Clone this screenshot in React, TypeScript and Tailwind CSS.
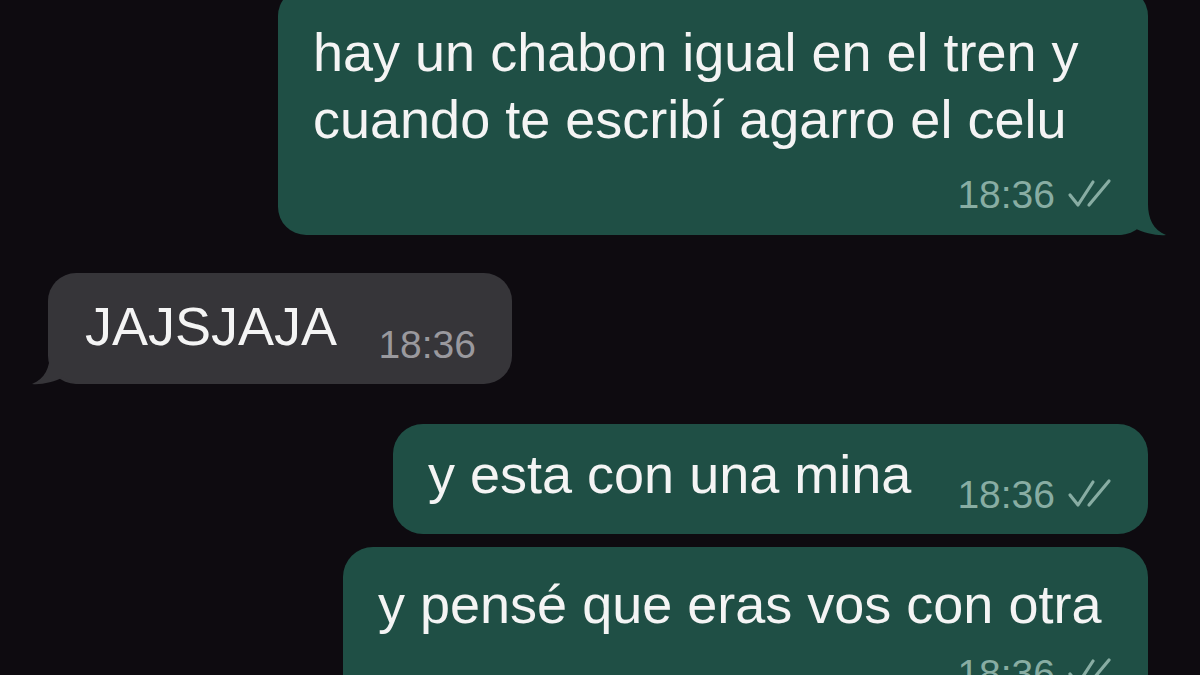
import React from "react";

const GREEN = "#1f4f45";

// double tick, as WhatsApp draws it when delivered
const Ticks = () => (
  <svg width="46" height="30" viewBox="0 0 46 30" fill="none" className="ml-[12px] mt-[7px] shrink-0">
    <path d="M3 17 L11 27 L26 4" stroke="#88ada3" strokeWidth="3.2" strokeLinecap="round" strokeLinejoin="round" />
    <path d="M22 27 L42 3" stroke="#88ada3" strokeWidth="3.2" strokeLinecap="round" />
  </svg>
);

const Time = ({ mine = true }: { mine?: boolean }) => (
  <span
    className={`text-[39px] leading-[47px] font-['Liberation_Sans',Arial,sans-serif] ${
      mine ? "text-[#88ada3]" : "text-[#9a999e]"
    }`}
  >
    18:36
  </span>
);

const TailRight = () => (
  <svg width="46" height="46" viewBox="0 0 46 46" className="absolute right-[-18px] bottom-[-1px]">
    <path d="M28 0 L28 14 C28 28 33 40 46 45 C37 46 24 43 14 38 C10 42 5 44 0 45 L0 0 Z" fill={GREEN} />
  </svg>
);

const TailLeft = () => (
  <svg width="46" height="46" viewBox="0 0 46 46" className="absolute left-[-16px] bottom-[-1px]">
    <path d="M18 0 L18 14 C18 28 13 40 0 45 C9 46 22 43 32 38 C36 42 41 44 46 45 L46 0 Z" fill="#363539" />
  </svg>
);

export default function App() {
  return (
    <div className="w-[1200px] h-[675px] overflow-hidden bg-[#0e0b10] font-['Liberation_Sans',Arial,sans-serif] text-[#f4f4f4] flex flex-col">
      {/* outgoing, two lines, top cut off */}
      <div className="self-end mr-[52px] -mt-[12px] relative w-[870px] bg-[#1f4f45] rounded-[28px] pl-[35px] pr-[35px] pt-[31px] pb-[17px]">
        <p className="text-[54px] leading-[67px] whitespace-nowrap">
          hay un chabon igual en el tren y
          <br />
          cuando te escribí agarro el celu
        </p>
        <div className="flex justify-end mt-[18px]">
          <Time />
          <Ticks />
        </div>
        <TailRight />
      </div>

      {/* incoming */}
      <div className="self-start ml-[48px] mt-[38px] relative w-[464px] bg-[#363539] rounded-[28px] pl-[37px] pr-[36px] pt-[20px] pb-[16px] flex justify-between items-start">
        <span className="text-[54px] leading-[67px]">JAJSJAJA</span>
        <div className="mt-[28px]">
          <Time mine={false} />
        </div>
        <TailLeft />
      </div>

      {/* outgoing, one line */}
      <div className="self-end mr-[52px] mt-[40px] w-[755px] bg-[#1f4f45] rounded-[30px] pl-[35px] pr-[35px] pt-[17px] pb-[16px] flex justify-between items-start">
        <span className="text-[54px] leading-[67px] whitespace-nowrap">y esta con una mina</span>
        <div className="flex mt-[30px]">
          <Time />
          <Ticks />
        </div>
      </div>

      <div className="self-end mr-[52px] mt-[13px] w-[805px] shrink-0 bg-[#1f4f45] rounded-[30px] pl-[35px] pr-[35px] pt-[24px] pb-[16px]">
        <p className="text-[54px] leading-[67px] whitespace-nowrap">y pensé que eras vos con otra</p>
        <div className="flex justify-end mt-[12px]">
          <Time />
          <Ticks />
        </div>
      </div>
    </div>
  );
}
